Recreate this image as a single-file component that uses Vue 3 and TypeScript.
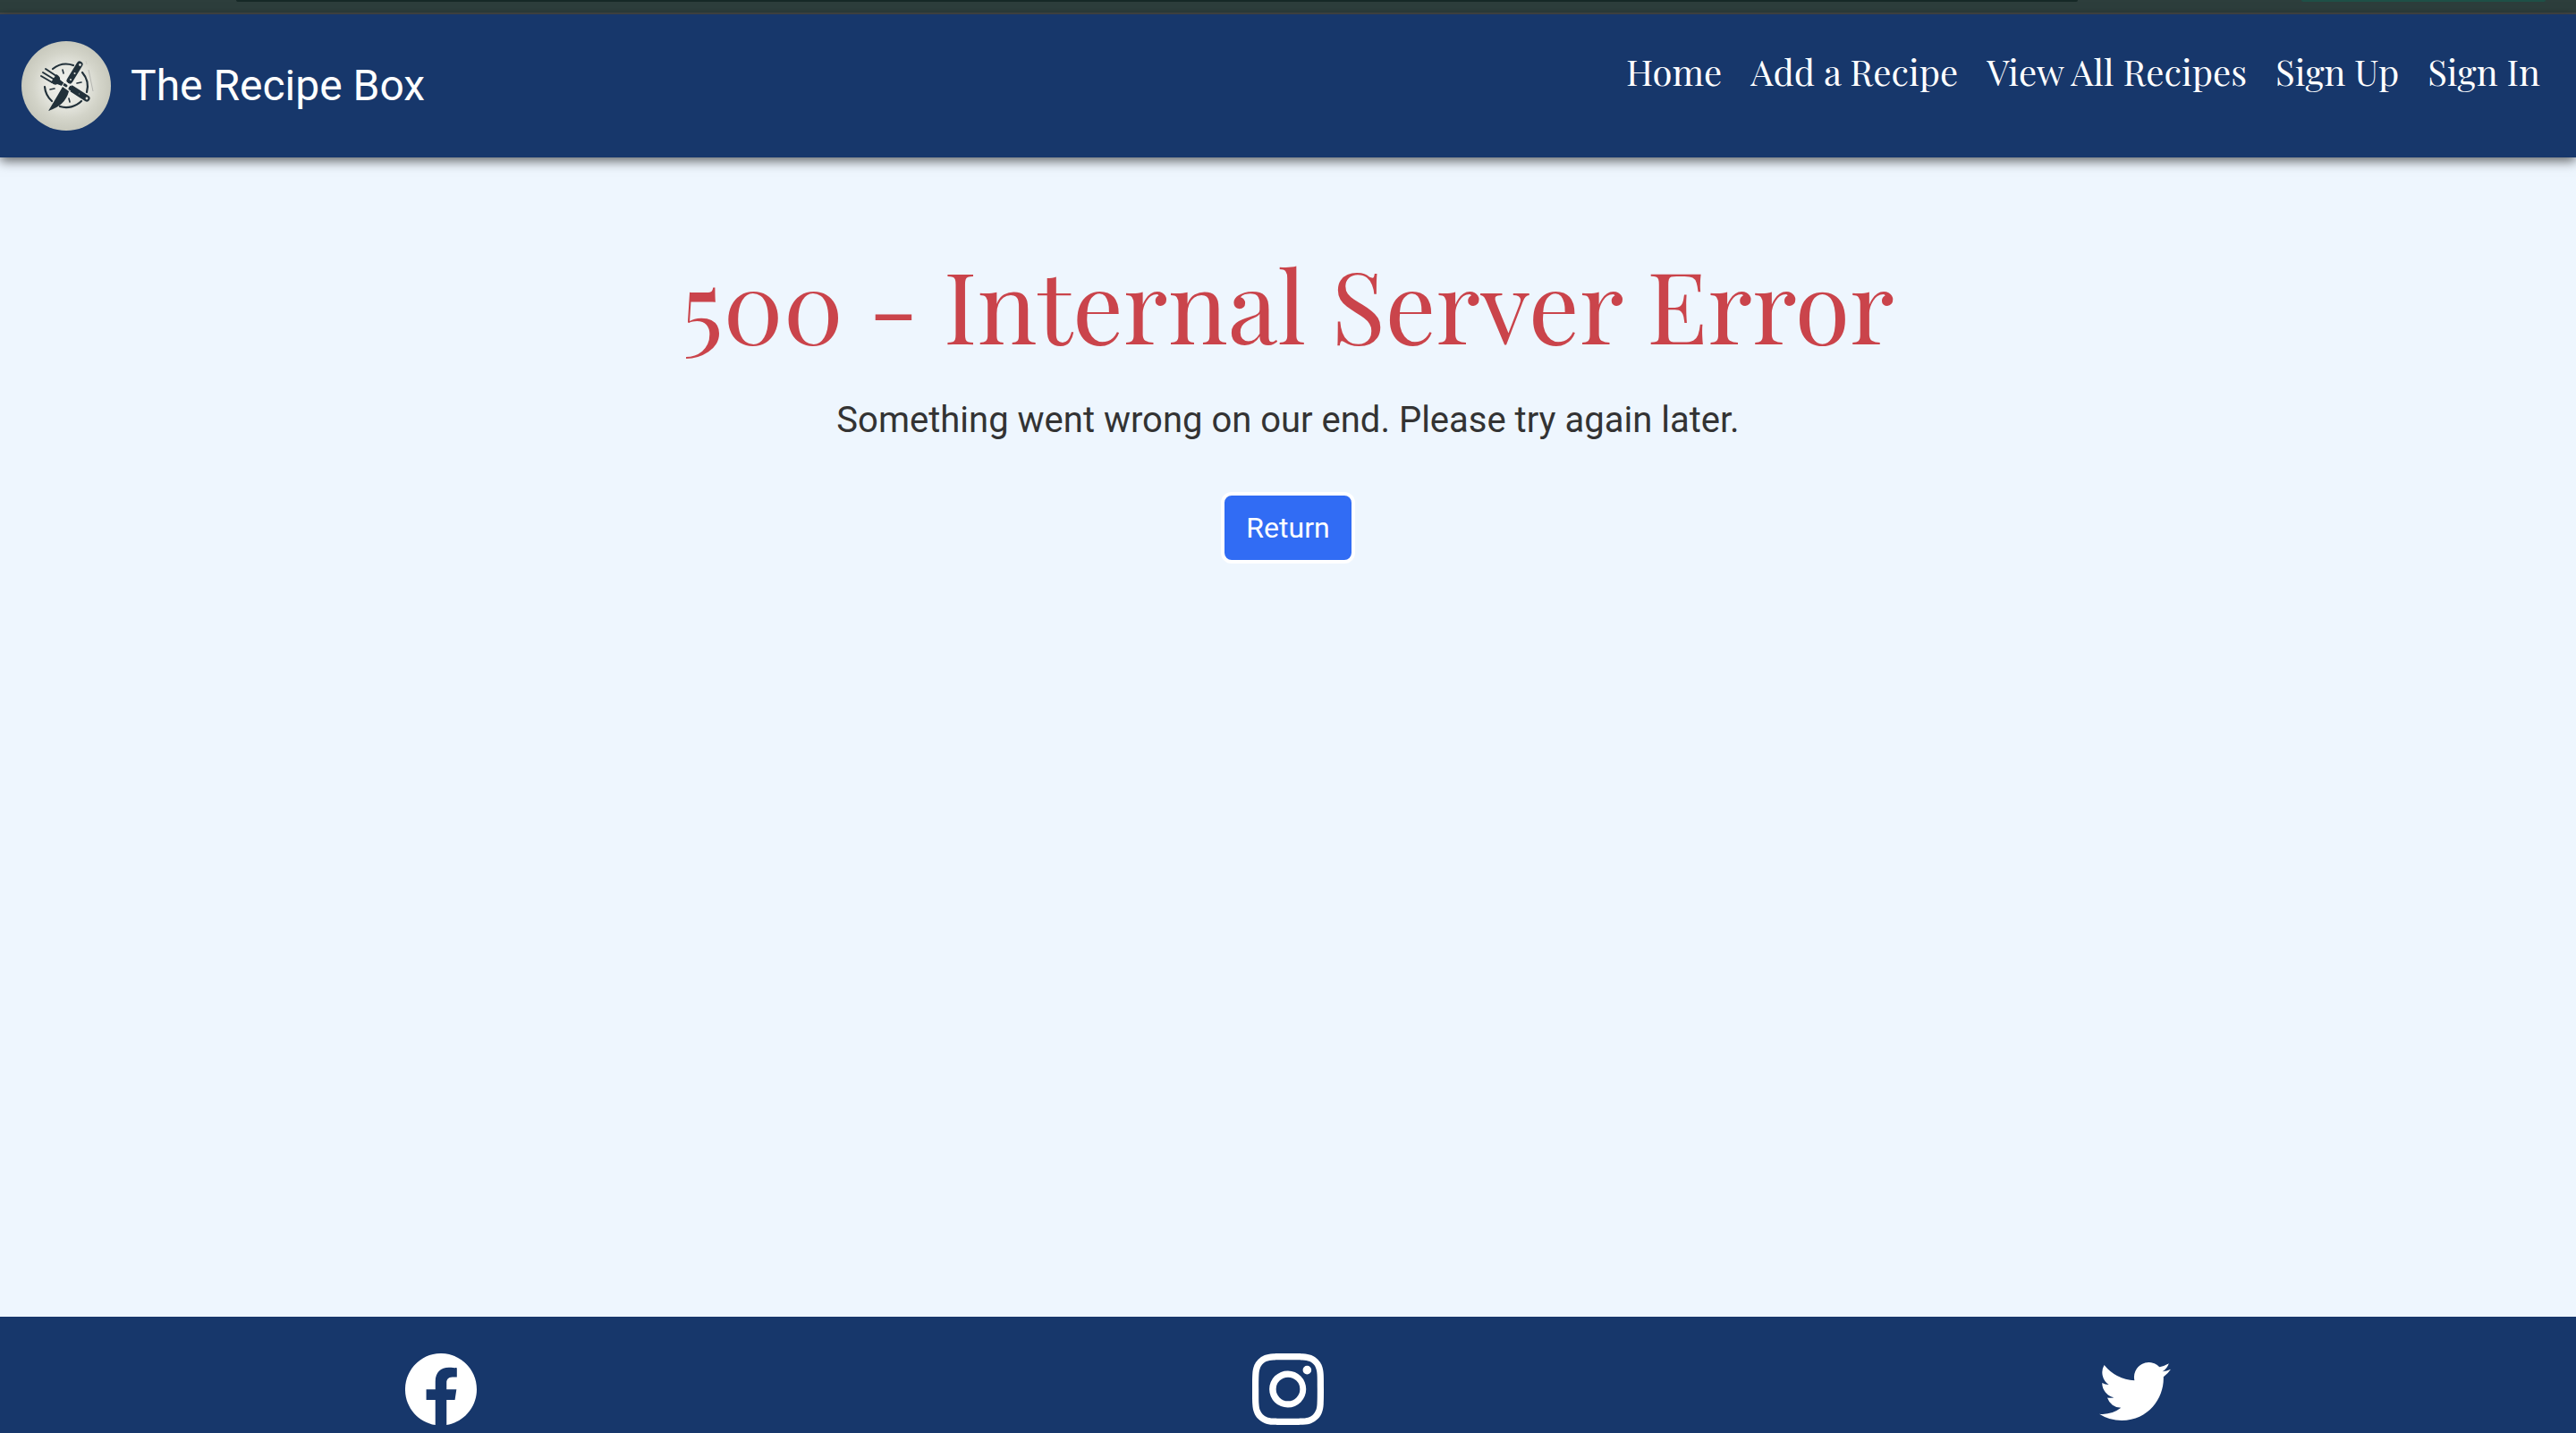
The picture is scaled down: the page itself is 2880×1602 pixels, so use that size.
<script setup lang="ts">
interface NavLink {
  label: string
  href: string
}

interface SocialLink extends NavLink {
  path: string
}

const navLinks: NavLink[] = [
  { label: 'Home', href: '#home' },
  { label: 'Add a Recipe', href: '#add' },
  { label: 'View All Recipes', href: '#recipes' },
  { label: 'Sign Up', href: '#signup' },
  { label: 'Sign In', href: '#signin' },
]

const socialLinks: SocialLink[] = [
  {
    label: 'Facebook',
    href: '#facebook',
    path: 'M16 8.049c0-4.446-3.582-8.05-8-8.05C3.58 0-.002 3.603-.002 8.05c0 4.017 2.926 7.347 6.75 7.951v-5.625h-2.03V8.05H6.75V6.275c0-2.017 1.195-3.131 3.022-3.131.876 0 1.791.157 1.791.157v1.98h-1.009c-.993 0-1.303.621-1.303 1.258v1.51h2.218l-.354 2.326H9.25V16c3.824-.604 6.75-3.934 6.75-7.951',
  },
  {
    label: 'Instagram',
    href: '#instagram',
    path: 'M8 0C5.829 0 5.556.01 4.703.048 3.85.088 3.269.222 2.76.42a3.9 3.9 0 0 0-1.417.923A3.9 3.9 0 0 0 .42 2.76C.222 3.268.087 3.85.048 4.7.01 5.555 0 5.827 0 8.001c0 2.172.01 2.444.048 3.297.04.852.174 1.433.372 1.942.205.526.478.972.923 1.417.444.445.89.719 1.416.923.51.198 1.09.333 1.942.372C5.555 15.99 5.827 16 8 16s2.444-.01 3.298-.048c.851-.04 1.434-.174 1.943-.372a3.9 3.9 0 0 0 1.416-.923c.445-.445.718-.891.923-1.417.197-.509.332-1.09.372-1.942C15.99 10.445 16 10.173 16 8s-.01-2.445-.048-3.299c-.04-.851-.175-1.433-.372-1.941a3.9 3.9 0 0 0-.923-1.417A3.9 3.9 0 0 0 13.24.42c-.51-.198-1.092-.333-1.943-.372C10.443.01 10.172 0 7.998 0zm-.717 1.442h.718c2.136 0 2.389.007 3.232.046.78.035 1.204.166 1.486.275.373.145.64.319.92.599s.453.546.598.92c.11.281.24.705.275 1.485.039.843.047 1.096.047 3.231s-.008 2.389-.047 3.232c-.035.78-.166 1.203-.275 1.485a2.5 2.5 0 0 1-.599.919c-.28.28-.546.453-.92.598-.28.11-.704.24-1.485.276-.843.038-1.096.047-3.232.047s-2.39-.009-3.233-.047c-.78-.036-1.203-.166-1.485-.276a2.5 2.5 0 0 1-.92-.598 2.5 2.5 0 0 1-.6-.92c-.109-.281-.24-.705-.275-1.485-.038-.843-.046-1.096-.046-3.233s.008-2.388.046-3.231c.036-.78.166-1.204.276-1.486.145-.373.319-.64.599-.92s.546-.453.92-.598c.282-.11.705-.24 1.485-.276.738-.034 1.024-.044 2.515-.045zm4.988 1.328a.96.96 0 1 0 0 1.92.96.96 0 0 0 0-1.92m-4.27 1.122a4.109 4.109 0 1 0 0 8.217 4.109 4.109 0 0 0 0-8.217m0 1.441a2.667 2.667 0 1 1 0 5.334 2.667 2.667 0 0 1 0-5.334',
  },
  {
    label: 'Twitter',
    href: '#twitter',
    path: 'M5.026 15c6.038 0 9.341-5.003 9.341-9.334q.002-.211-.006-.422A6.7 6.7 0 0 0 16 3.542a6.7 6.7 0 0 1-1.889.518 3.3 3.3 0 0 0 1.447-1.817 6.5 6.5 0 0 1-2.087.793A3.286 3.286 0 0 0 7.875 6.03a9.32 9.32 0 0 1-6.767-3.429 3.29 3.29 0 0 0 1.018 4.382A3.3 3.3 0 0 1 .64 6.575v.045a3.29 3.29 0 0 0 2.632 3.218 3.2 3.2 0 0 1-.865.115 3 3 0 0 1-.614-.057 3.28 3.28 0 0 0 3.067 2.277A6.6 6.6 0 0 1 .78 13.58a6 6 0 0 1-.78-.045A9.34 9.34 0 0 0 5.026 15',
  },
]

function goBack(): void {
  window.history.back()
}
</script>

<template>
  <div class="page">
    <div class="chrome" aria-hidden="true">
      <span class="chrome-field"></span>
      <span class="chrome-pill"></span>
    </div>

    <header class="header">
      <a class="brand" href="#home">
        <svg class="logo" viewBox="0 0 100 100" aria-hidden="true">
          <defs>
            <radialGradient id="plate">
              <stop offset="0" stop-color="#f3f4f0" />
              <stop offset="0.45" stop-color="#e6e7e0" />
              <stop offset="0.75" stop-color="#d3d4c9" />
              <stop offset="1" stop-color="#c8c9bd" />
            </radialGradient>
          </defs>
          <circle cx="50" cy="50" r="50" fill="url(#plate)" />
          <g fill="none" stroke="#22313a" stroke-width="2.2" stroke-linecap="round">
            <path d="M35 31A24 24 0 0 1 58 27" />
            <path d="M68 35A24 24 0 0 1 73 57" />
            <path d="M67 67A24 24 0 0 1 43 73" />
            <path d="M34 67A24 24 0 0 1 26 51" />
            <path d="M46 32l1 4M32 54l5-1M62 47l5-1M53 64l1 4" stroke-width="1.6" />
          </g>
          <g fill="none" stroke="#22313a" stroke-linecap="round">
            <path d="M65 26L54 44" stroke-width="7" />
            <path d="M56 53L73 64" stroke-width="7" />
            <path d="M50 50L41 44" stroke-width="3" />
            <path d="M22 39L34 46M24 35L37 43M27 31L39 39" stroke-width="2" />
          </g>
          <path d="M33 46L39 37Q44 40 43 43L47 47L45 50L40 48Q37 50 33 46Z" fill="#22313a" />
          <path d="M46 51L53 56Q49 72 30 78Q35 70 46 51Z" fill="#22313a" />
          <path d="M44 52l4-6M46 50l9 6M49 45l7 5M51 54l4-6" stroke="#e9eae4" stroke-width="1" />
          <g fill="#dfe0d9">
            <circle cx="65.500" cy="26.500" r="1.400" />
            <circle cx="59.500" cy="36" r="1" />
            <circle cx="55" cy="43" r="1" />
            <circle cx="73" cy="64" r="1.400" />
            <circle cx="64.500" cy="59" r="0.700" opacity="0.500" />
          </g>
          <path d="M75 32L80 56" stroke="#b4b5b0" stroke-width="1" />
          <path d="M72 22l1 4" stroke="#c4c5be" stroke-width="0.8" />
        </svg>
        <span>The Recipe Box</span>
      </a>
      <nav aria-label="Main">
        <ul class="nav-list">
          <li v-for="link in navLinks" :key="link.label">
            <a class="nav-link" :href="link.href">{{ link.label }}</a>
          </li>
        </ul>
      </nav>
    </header>

    <main class="main">
      <h1 class="title">500 - Internal Server Error</h1>
      <p class="message">Something went wrong on our end. Please try again later.</p>
      <button class="return" type="button" @click="goBack">Return</button>
    </main>

    <footer class="footer">
      <a
        v-for="social in socialLinks"
        :key="social.label"
        class="social"
        :href="social.href"
        :aria-label="social.label"
      >
        <svg viewBox="0 0 16 16" fill="currentColor" aria-hidden="true">
          <path :d="social.path" />
        </svg>
      </a>
    </footer>
  </div>
</template>

<style>
body {
  margin: 0;
  background: #eef6fe;
}
</style>

<style scoped>
.page {
  display: flex;
  flex-direction: column;
  min-height: 100vh;
  font-family: Roboto, sans-serif;
  color: #333333;
}

.chrome {
  display: flex;
  box-sizing: border-box;
  height: 16px;
  padding: 0 34px 0 264px;
  gap: 250px;
  background: #2d3e3c;
  border-bottom: 2px solid #464949;
}

.chrome-field,
.chrome-pill {
  height: 2px;
  border-radius: 0 0 12px 12px;
}

.chrome-field {
  flex: 1;
  background: #162826;
}

.chrome-pill {
  width: 273px;
  background: #1e5047;
}

.header {
  display: flex;
  justify-content: space-between;
  align-items: flex-start;
  padding: 30px 40px 30px 24px;
  background: #17376b;
  box-shadow: 0 4px 12px rgba(0, 0, 0, 0.6);
}

.brand {
  display: flex;
  align-items: center;
  gap: 22px;
  color: #ffffff;
  font-size: 48px;
  line-height: 72px;
  text-decoration: none;
}

.logo {
  width: 100px;
  height: 100px;
}

.nav-list {
  display: flex;
  gap: 32px;
  margin: 0;
  padding: 4px 0 0;
  list-style: none;
}

.nav-link {
  display: block;
  color: #ffffff;
  font-family: "Playfair Display", "Liberation Serif", serif;
  font-size: 40px;
  line-height: 60px;
  text-decoration: none;
}

.main {
  display: flex;
  flex: 1;
  flex-direction: column;
  align-items: center;
  padding: 96px 24px 0;
}

.title {
  margin: 0 0 34px;
  color: #ca444b;
  font-family: "Playfair Display", "Liberation Serif", serif;
  font-size: 112px;
  font-weight: 400;
  line-height: 134px;
  text-align: center;
}

.message {
  margin: 0 0 50px;
  font-size: 40px;
  line-height: 60px;
  text-align: center;
}

.return {
  padding: 12px 24px;
  border: 4px solid #ffffff;
  border-radius: 12px;
  background: #316cf4;
  color: #ffffff;
  font-family: inherit;
  font-size: 32px;
  line-height: 48px;
}

.footer {
  display: grid;
  grid-template-columns: repeat(3, 1fr);
  justify-items: center;
  padding: 41px 20px 9px;
  background: #17376b;
  color: #ffffff;
}

.social {
  display: block;
  width: 80px;
  height: 80px;
  color: inherit;
}

.social svg {
  display: block;
  width: 100%;
  height: 100%;
}
</style>
